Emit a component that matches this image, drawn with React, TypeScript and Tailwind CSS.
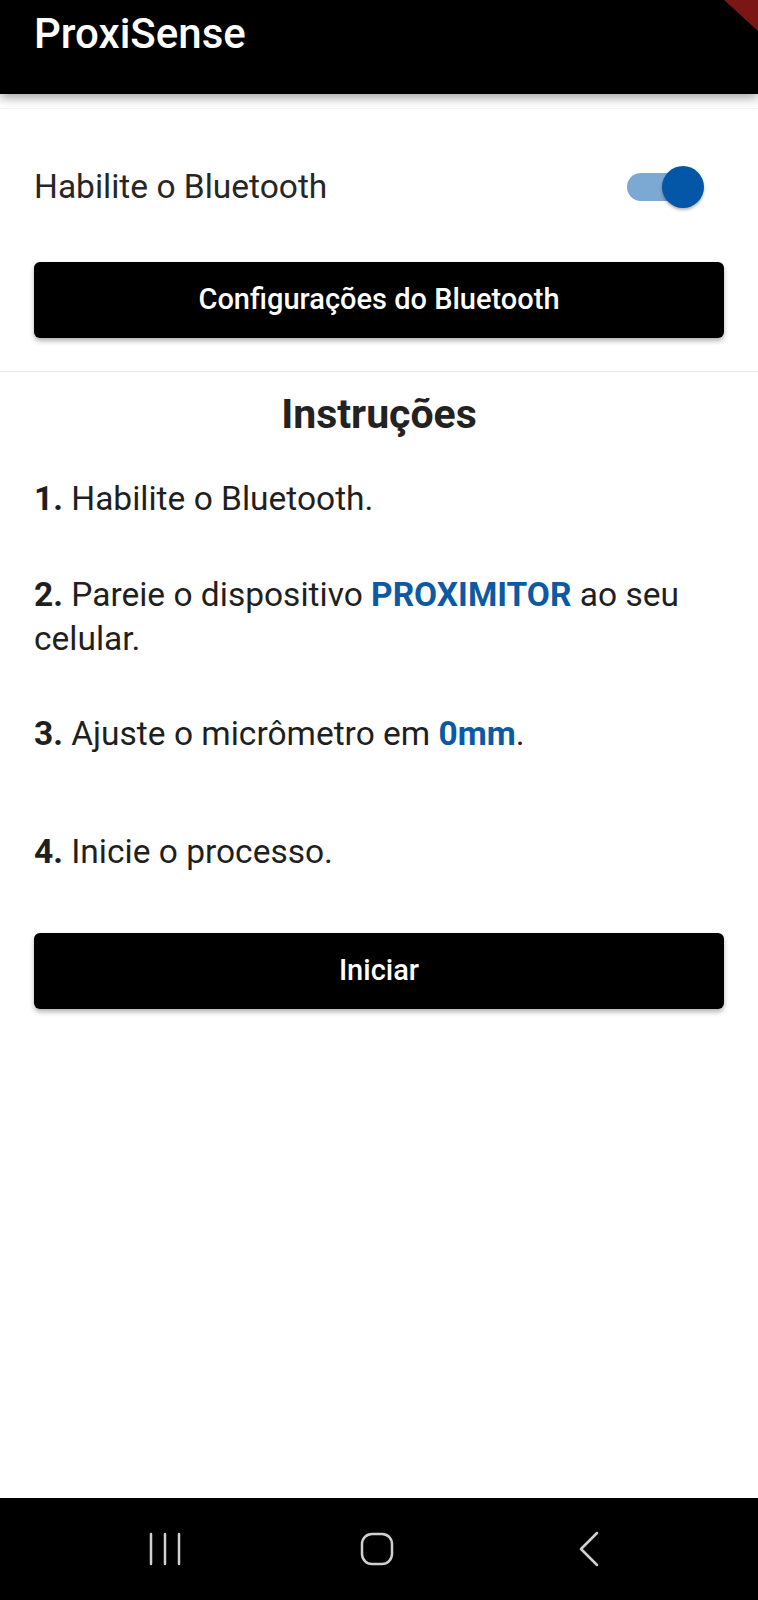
import React, { useState } from "react";

const FONT = { fontFamily: "Roboto, 'Noto Sans', sans-serif" };

export default function App() {
    const [enabled, setEnabled] = useState(true);

    return (
        <div className="min-h-[1600px] flex flex-col bg-white" style={FONT}>
            {/* App bar */}
            <header className="relative h-[94px] bg-black px-[34px] pt-[10px] shadow-[0_4px_10px_rgba(0,0,0,0.35)] z-10">
                <h1 className="text-white text-[42px] leading-[48px] font-medium">ProxiSense</h1>
                <svg className="absolute right-0 top-0" width="36" height="32" viewBox="0 0 36 32">
                    <polygon points="2,0 36,0 36,31" fill="#7a1616" />
                </svg>
            </header>

            <main className="flex flex-col px-[34px]">
                <div className="-mx-[34px] mt-[14px] h-px bg-gray-100" />

                {/* Bluetooth toggle */}
                <div className="mt-[54px] h-[48px] flex items-center justify-between">
                    <span className="text-[33.5px] leading-[48px] text-[#262626]">Habilite o Bluetooth</span>
                    <button
                        onClick={() => setEnabled(!enabled)}
                        className="relative w-[80px] h-[48px] mr-[21px]"
                    >
                        <span className={`absolute left-[4px] top-[10px] w-[72px] h-[28px] rounded-full ${enabled ? "bg-[#7ca8d4]" : "bg-gray-300"}`} />
                        <span
                            className={`absolute top-[3px] w-[42px] h-[42px] rounded-full shadow-[0_2px_3px_rgba(0,0,0,0.3)] ${enabled ? "left-[39px] bg-[#0357a6]" : "left-0 bg-gray-50"}`}
                        />
                    </button>
                </div>

                <button className="mt-[51px] h-[76px] rounded-[6px] bg-black text-white text-[29px] font-medium shadow-[0_3px_5px_rgba(0,0,0,0.3)]">
                    Configurações do Bluetooth
                </button>

                <div className="-mx-[34px] mt-[33px] h-px bg-gray-200" />

                {/* Instructions */}
                <h2 className="mt-[18px] text-center text-[41px] leading-[48px] font-bold text-[#222]">Instruções</h2>

                <div className="text-[33.5px] leading-[44px] text-[#1f1f1f]">
                    <p className="mt-[39px]"><b className="font-bold">1.</b> Habilite o Bluetooth.</p>
                    <p className="mt-[52px]">
                        <b className="font-bold">2.</b> Pareie o dispositivo{" "}
                        <b className="font-bold text-[#0b5aa3]">PROXIMITOR</b> ao seu celular.
                    </p>
                    <p className="mt-[51px]">
                        <b className="font-bold">3.</b> Ajuste o micrômetro em{" "}
                        <b className="font-bold text-[#0b5aa3]">0mm</b>.
                    </p>
                    <p className="mt-[74px]"><b className="font-bold">4.</b> Inicie o processo.</p>
                </div>

                <button className="mt-[59px] h-[76px] rounded-[6px] bg-black text-white text-[29px] font-medium shadow-[0_3px_5px_rgba(0,0,0,0.3)]">
                    Iniciar
                </button>
            </main>

            <div className="flex-1" />

            {/* System navigation bar */}
            <nav className="h-[102px] bg-black flex items-center pl-[135px] gap-[152px]">
                <div className="w-[60px] flex justify-center">
                    <svg width="32" height="34" viewBox="0 0 32 34" fill="none" stroke="#d0d0d0" strokeWidth="2.5" strokeLinecap="round">
                        <line x1="2" y1="2" x2="2" y2="32" />
                        <line x1="16" y1="2" x2="16" y2="32" />
                        <line x1="30" y1="2" x2="30" y2="32" />
                    </svg>
                </div>
                <div className="w-[60px] flex justify-center">
                    <svg width="34" height="34" viewBox="0 0 34 34" fill="none">
                        <rect x="2" y="2" width="30" height="30" rx="10" stroke="#d0d0d0" strokeWidth="2.5" />
                    </svg>
                </div>
                <div className="w-[60px] flex justify-center">
                    <svg width="22" height="36" viewBox="0 0 22 36" fill="none">
                        <polyline points="19,2 3,18 19,34" stroke="#d0d0d0" strokeWidth="2.5" strokeLinecap="round" strokeLinejoin="round" />
                    </svg>
                </div>
            </nav>
        </div>
    );
}
